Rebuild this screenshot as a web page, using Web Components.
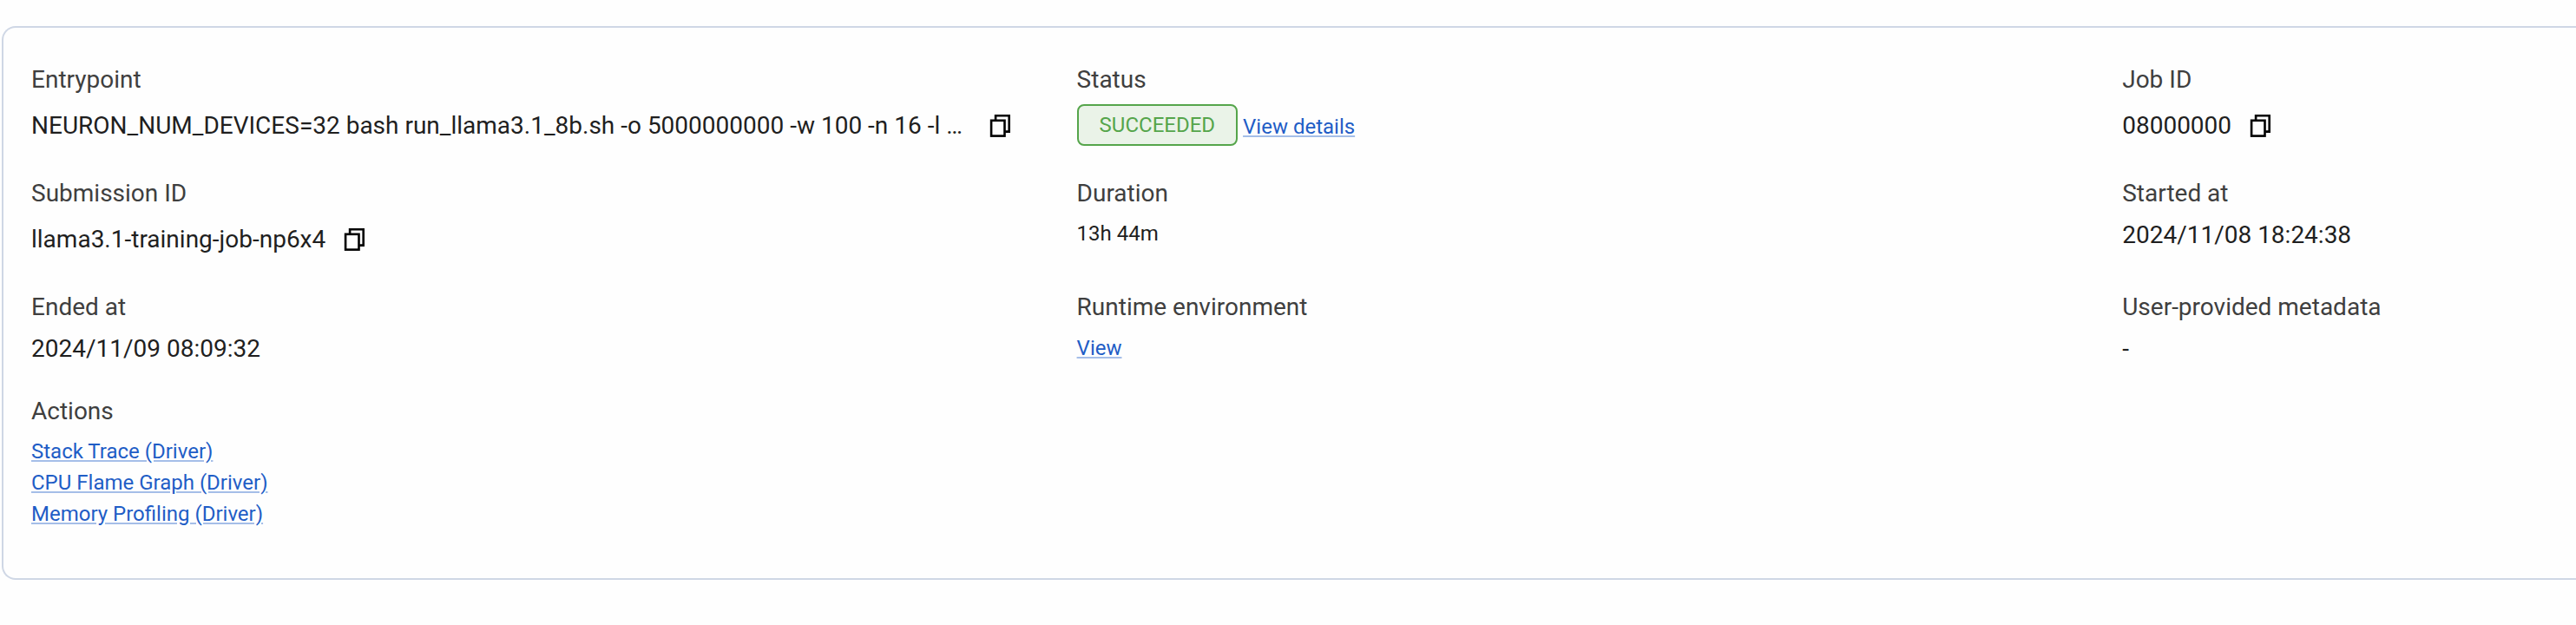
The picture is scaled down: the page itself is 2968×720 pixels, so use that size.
<!DOCTYPE html>
<html lang="en">
<head>
<meta charset="utf-8">
<title>Job details</title>
<style>
  html, body { margin: 0; background: #fefefe; }
  body { height: 720px; overflow: hidden; font-family: Roboto, "Liberation Sans", sans-serif; }
  .wide { --copy-gap: 31px; }
</style>
</head>
<body>
<job-card>
  <meta-item label="Entrypoint"><copy-text class="wide">NEURON_NUM_DEVICES=32 bash run_llama3.1_8b.sh -o 5000000000 -w 100 -n 16 -l …</copy-text></meta-item>
  <meta-item label="Status"><status-line><status-tag>SUCCEEDED</status-tag><text-link>View details</text-link></status-line></meta-item>
  <meta-item label="Job ID"><copy-text>08000000</copy-text></meta-item>
  <meta-item label="Submission ID"><copy-text>llama3.1-training-job-np6x4</copy-text></meta-item>
  <meta-item label="Duration"><small-text>13h 44m</small-text></meta-item>
  <meta-item label="Started at">2024/11/08 18:24:38</meta-item>
  <meta-item label="Ended at">2024/11/09 08:09:32</meta-item>
  <meta-item label="Runtime environment"><link-list style="padding-top: 1px"><text-link>View</text-link></link-list></meta-item>
  <meta-item label="User-provided metadata">-</meta-item>
  <meta-item label="Actions"><link-list>
    <text-link>Stack Trace (Driver)</text-link>
    <text-link>CPU Flame Graph (Driver)</text-link>
    <text-link>Memory Profiling (Driver)</text-link>
  </link-list></meta-item>
</job-card>
<script>
const define = (name, html, setup) => customElements.define(name, class extends HTMLElement {
  connectedCallback() {
    if (this.shadowRoot) return;
    const root = this.attachShadow({ mode: 'open' });
    const t = document.createElement('template');
    t.innerHTML = html;
    root.append(t.content.cloneNode(true));
    if (setup) setup(this, root);
  }
});

define('job-card', `<style>
  :host { display: grid; box-sizing: border-box; grid-template-columns: 1204.6px 1204.6px 1fr; grid-template-rows: 99px 99px 88px auto;
    row-gap: 32px; height: 638px; margin: 30px 0 0 2px; padding: 40px 0 40px 32px;
    border: 2px solid #cfd7e5; border-right: 0; border-radius: 16px 0 0 16px; background: #fefefe; }
</style><slot></slot>`);

define('meta-item', `<style>
  :host { display: block; min-width: 0; font-size: 28px; line-height: 40px; color: #1f1f1f; white-space: nowrap; }
  .label { color: #3f3f3f; margin-bottom: 8px; }
</style><div class="label"></div><div class="value"><slot></slot></div>`,
  (host, root) => { root.querySelector('.label').textContent = host.getAttribute('label'); });

define('copy-text', `<style>
  :host { display: flex; align-items: center; height: 51px; }
  .text { margin-top: -1px; }
  svg { display: block; margin: -1px 0 0 var(--copy-gap, 21px); }
</style><span class="text"><slot></slot></span>
<svg width="25" height="28" viewBox="0 0 25 28" fill="none" stroke="#000" stroke-width="2.6">
  <path d="M7.1 7.3V2.3H22.7V20.6H18.2"/><rect x="2.1" y="7.8" width="15.4" height="17.8"/>
</svg>`);

define('status-line', `<style>
  :host { display: flex; align-items: flex-start; gap: 6px; }
  ::slotted(text-link) { margin-top: 8px; }
</style><slot></slot>`);

define('status-tag', `<style>
  :host { display: block; box-sizing: border-box; height: 48px; padding: 0 24px; border: 2px solid #55a54b; border-radius: 8px;
    background: #eaf3e8; color: #55a54b; font-size: 24px; line-height: 44px; }
</style><slot></slot>`);

define('text-link', `<style>
  :host { display: block; font-size: 24px; line-height: 36px; color: #1f5dc6; }
  a { color: inherit; text-decoration: underline; text-decoration-color: #a5bee8; }
</style><a><slot></slot></a>`);

define('link-list', `<style>:host { display: flex; flex-direction: column; align-items: flex-start; }</style><slot></slot>`);
define('small-text', `<style>:host { display: block; font-size: 24px; line-height: 36px; }</style><slot></slot>`);
</script>
</body>
</html>
